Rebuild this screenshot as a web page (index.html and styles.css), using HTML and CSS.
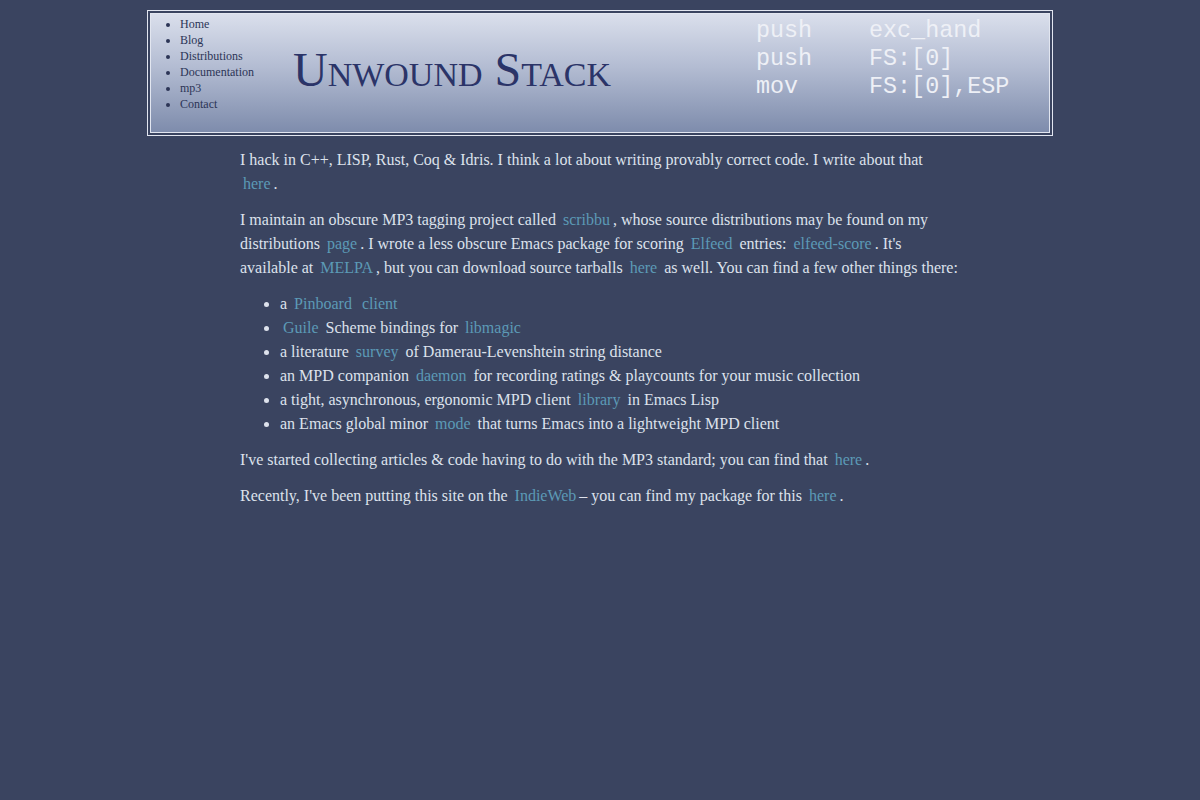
FILE: index.html
```html
<!DOCTYPE html>
<html lang="en">
<head>
<meta charset="utf-8">
<title>Unwound Stack</title>
<link rel="stylesheet" href="styles.css">
</head>
<body>
<header class="banner">
  <ul class="nav">
    <li><a href="#">Home</a></li>
    <li><a href="#">Blog</a></li>
    <li><a href="#">Distributions</a></li>
    <li><a href="#">Documentation</a></li>
    <li><a href="#">mp3</a></li>
    <li><a href="#">Contact</a></li>
  </ul>
  <h1 class="title">Unwound Stack</h1>
  <div class="asm">
    <span>push</span><span>exc_hand</span>
    <span>push</span><span>FS:[0]</span>
    <span>mov</span><span>FS:[0],ESP</span>
  </div>
</header>
<main class="content">
  <p>I hack in C++, LISP, Rust, Coq &amp; Idris. I think a lot about writing provably correct code. I write about that <a href="#">here</a>.</p>
  <p>I maintain an obscure MP3 tagging project called <a href="#">scribbu</a>, whose source distributions may be found on my distributions <a href="#">page</a>. I wrote a less obscure Emacs package for scoring <a href="#">Elfeed</a> entries: <a href="#">elfeed-score</a>. It's available at <a href="#">MELPA</a>, but you can download source tarballs <a href="#">here</a> as well. You can find a few other things there:</p>
  <ul class="things">
    <li>a <a href="#">Pinboard</a> <a href="#">client</a></li>
    <li><a href="#">Guile</a> Scheme bindings for <a href="#">libmagic</a></li>
    <li>a literature <a href="#">survey</a> of Damerau-Levenshtein string distance</li>
    <li>an MPD companion <a href="#">daemon</a> for recording ratings &amp; playcounts for your music collection</li>
    <li>a tight, asynchronous, ergonomic MPD client <a href="#">library</a> in Emacs Lisp</li>
    <li>an Emacs global minor <a href="#">mode</a> that turns Emacs into a lightweight MPD client</li>
  </ul>
  <p>I've started collecting articles &amp; code having to do with the MP3 standard; you can find that <a href="#">here</a>.</p>
  <p>Recently, I've been putting this site on the <a href="#">IndieWeb</a>– you can find my package for this <a href="#">here</a>.</p>
</main>
</body>
</html>
```

FILE: styles.css
```css
html, body {
  margin: 0;
  padding: 0;
}
body {
  background: #3a4460;
  color: #dde2ec;
  font-family: "Liberation Serif", "Times New Roman", serif;
  font-size: 16px;
  line-height: 24px;
}
.banner {
  box-sizing: border-box;
  width: 900px;
  height: 120px;
  margin: 13px auto 0;
  border: 1px solid #e2e6f0;
  outline: 1px solid #e2e6f0;
  outline-offset: 2px;
  background: linear-gradient(to bottom, #dadfec 0%, #b3bcd2 45%, #7e8cac 100%);
  display: flex;
  align-items: flex-start;
}
.nav {
  width: 115px;
  flex: none;
  margin: 0;
  padding: 2px 0 0 29px;
  font-size: 12px;
  line-height: 16px;
  color: #2c3556;
}
.nav a {
  color: #2c3556;
  text-decoration: none;
}
.title {
  flex: none;
  width: 461px;
  margin: 0 0 0 -2px;
  padding-top: 28px;
  font-size: 48px;
  line-height: 56px;
  font-weight: normal;
  font-variant: small-caps;
  color: #2b3468;
  white-space: nowrap;
}
.asm {
  flex: none;
  display: grid;
  grid-template-columns: 113px auto;
  margin-left: 2px;
  padding-top: 3px;
  font-family: "Liberation Mono", "Courier New", monospace;
  font-size: 23.4px;
  line-height: 28px;
  color: #eef0f6;
}
.content {
  width: 720px;
  margin: 15px auto 0;
}
.content p {
  margin: 12px 0;
}
.content a {
  color: #5c9ab6;
  text-decoration: none;
  margin: 0 3px;
}
.things {
  margin: 12px 0;
  padding-left: 40px;
}
```
